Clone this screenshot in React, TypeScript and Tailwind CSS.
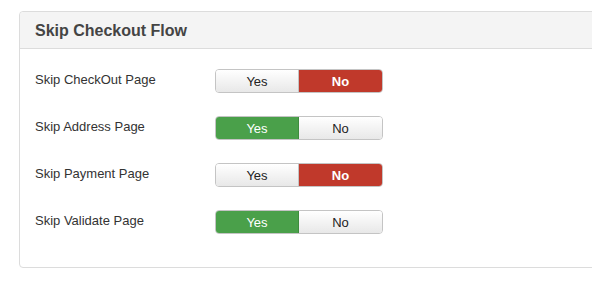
const ROWS = [
  { label: 'Skip CheckOut Page', value: false },
  { label: 'Skip Address Page', value: true },
  { label: 'Skip Payment Page', value: false },
  { label: 'Skip Validate Page', value: true },
]

const btnBase = 'w-[84px] h-full flex items-center justify-center text-[13px] leading-none'
const btnOff = 'bg-gradient-to-b from-white to-[#e8e8e8] text-[#222]'

function Toggle({ value }: { value: boolean }) {
  return (
    <div className="flex h-[24px] w-[168px] rounded-[4px] border border-[#c4c4c4] overflow-hidden">
      <div
        className={`${btnBase} border-r ${
          value ? 'bg-[#4aa04a] text-white border-[#3f8c3f]' : `${btnOff} border-[#c4c4c4]`
        }`}
      >
        Yes
      </div>
      <div className={`${btnBase} ${value ? btnOff : 'bg-[#c0392b] text-white font-bold'}`}>No</div>
    </div>
  )
}

export default function App() {
  return (
    <div className="w-[592px] h-[293px] bg-white overflow-hidden pl-[19px] pt-[11px] font-['Liberation_Sans',Arial,sans-serif]">
      <div className="w-[620px] rounded-[4px] border border-[#dcdcdc] bg-white">
        <div className="h-[37px] bg-[#f4f4f4] border-b border-[#dcdcdc] rounded-t-[4px] flex items-center pl-[15px]">
          <h2 className="text-[16px] font-bold text-[#444] pt-[1px]">Skip Checkout Flow</h2>
        </div>
        <div className="pl-[15px] pt-[20px] pb-[33px] flex flex-col gap-[23px]">
          {ROWS.map((row) => (
            <div key={row.label} className="flex items-start h-[24px]">
              <div className="w-[180px] pt-[2px] text-[13px] leading-[18px] text-[#333]">{row.label}</div>
              <Toggle value={row.value} />
            </div>
          ))}
        </div>
      </div>
    </div>
  )
}
